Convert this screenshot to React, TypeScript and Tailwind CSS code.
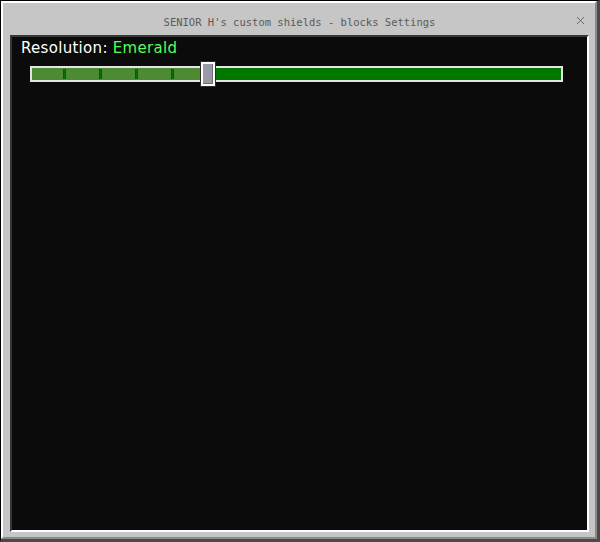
import React from 'react';

const ticks = [63, 99, 135, 171];

const Slider: React.FC<{ handleX: number }> = ({ handleX }) => {
  return (
    <div className="relative ml-[18px] mt-[4px] w-[533px] h-[26px]">
      <div className="absolute left-0 top-[5px] w-[533px] h-[16px] border-2 border-[#e4e4e4] bg-[#007800] flex">
        <div className="h-full bg-[#4e8a34]" style={{ width: handleX }} />
      </div>
      {ticks.map((x) => (
        <div
          key={x}
          className="absolute top-[8px] h-[10px] w-[3px] bg-[#0b6f0b] border-x border-[#0a5a0a]"
          style={{ left: x - 30 }}
        />
      ))}
      <div
        className="absolute top-0 w-[16px] h-[26px] border border-[#2a2a2a] bg-white p-[2px]"
        style={{ left: handleX }}
      >
        <div className="w-full h-full bg-[#9a9aa6] border-r border-b border-[#6d6d78]" />
      </div>
    </div>
  );
};

export default function App() {
  return (
    <div className="w-[600px] h-[542px] box-border border-t border-l border-black border-r-[3px] border-b-[3px] border-r-[#4a4a4a] border-b-[#4a4a4a]">
      <div className="h-full flex flex-col box-border border-t-2 border-l-2 border-white border-r-2 border-b-2 border-r-[#8b8b8b] border-b-[#8b8b8b] bg-[#c6c6c6] pl-[7px] pr-[6px] pb-[5px] rounded-tl-[2px]">
        <div className="relative h-[32px] flex items-center justify-center pt-[8px]">
          <span className="text-[10.5px] text-[#5a5a5a]" style={{ fontFamily: '"DejaVu Sans Mono", monospace' }}>
            SENIOR H's custom shields - blocks Settings
          </span>
          <svg className="absolute right-[4px] top-[13px]" width="9" height="9" viewBox="0 0 9 9" shapeRendering="crispEdges">
            <path d="M1 1 L8 8 M8 1 L1 8" stroke="#666" strokeWidth="1.2" />
          </svg>
        </div>
        <div className="flex-1 box-border border-t-2 border-l-2 border-[#373737] border-r-2 border-b-2 border-r-white border-b-white bg-[#0b0b0b]">
          <div className="pl-[9px] pt-[2px] text-[15px] leading-[18px] tracking-[0.3px]" style={{ fontFamily: '"DejaVu Sans", sans-serif' }}>
            <span className="text-white">Resolution: </span>
            <span className="text-[#55ff55]">Emerald</span>
          </div>
          <Slider handleX={170} />
        </div>
      </div>
    </div>
  );
}
